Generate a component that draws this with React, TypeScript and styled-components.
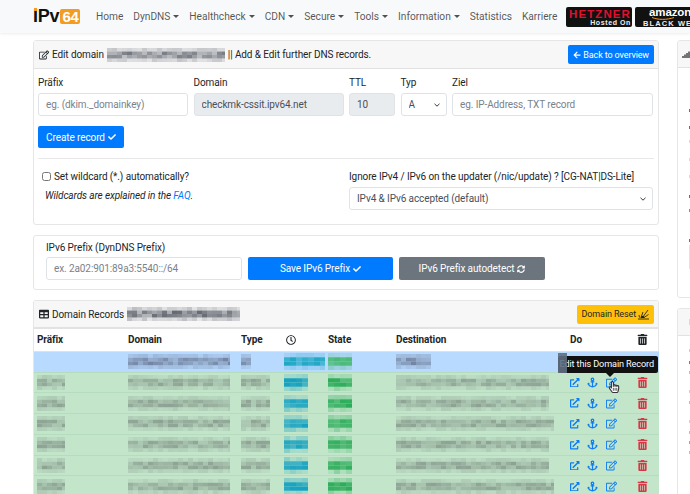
import React from "react";
import styled, { createGlobalStyle } from "styled-components";
import {
  FaAnchor,
  FaArrowLeft,
  FaCheck,
  FaExternalLinkAlt,
  FaHandPointer,
  FaRegClock,
  FaRegEdit,
  FaRegHandPointer,
  FaSignal,
  FaSyncAlt,
  FaTable,
  FaTrashAlt,
} from "react-icons/fa";

const GlobalStyle = createGlobalStyle`
  html, body {
    margin: 0;
    padding: 0;
    width: 690px;
    height: 494px;
    overflow: hidden;
    background: #fff;
    font-family: Roboto, "Open Sans", "Liberation Sans", sans-serif;
    font-size: 10px;
    letter-spacing: -0.1px;
    color: #212529;
  }
  * { box-sizing: border-box; }
`;

// pixelated smudge standing in for the censored strings of the screenshot
const Mosaic: React.FC<{ w: number; color: string; seed: number; h?: number; cell?: number; solid?: boolean }> = ({
  w,
  color,
  seed,
  h = 15,
  cell = 5,
  solid = false,
}) => {
  let s = seed * 7919 + 13;
  const next = () => {
    s = (s * 1103515245 + 12345) & 0x7fffffff;
    return (s >> 8) % 100;
  };
  const rects = [];
  const rowH = h / 4;
  for (let x = 0; x < w; x += cell) {
    for (let r = 0; r < 4; r++) {
      const edge = r === 0 || r === 3;
      const base = edge ? 0.12 : solid ? 0.7 : 0.4;
      rects.push(
        <rect
          key={`${x}-${r}`}
          x={x}
          y={r * rowH}
          width={cell}
          height={rowH}
          fill={color}
          opacity={base + (next() / 100) * (edge ? 0.25 : solid ? 0.3 : 0.55)}
        />
      );
    }
  }
  return (
    <MosaicSvg width={w} height={h}>
      {rects}
    </MosaicSvg>
  );
};

const NAV = [
  { label: "Home" },
  { label: "DynDNS", caret: true },
  { label: "Healthcheck", caret: true },
  { label: "CDN", caret: true },
  { label: "Secure", caret: true },
  { label: "Tools", caret: true },
  { label: "Information", caret: true },
  { label: "Statistics" },
  { label: "Karriere" },
];

const SIDE_TOP: [number, string][] = [
  [44, "#8a6a50"],
  [17, "#8a6a50"],
  [14, "#f6d3a8"],
  [18, "#f6d3a8"],
  [17, "#f6d3a8"],
  [20, "#7a6a60"],
  [14, "#9a8a80"],
  [30, "#8a6a50"],
];

const SIDE_BOTTOM: [number, string][] = [
  [16, "#ecc89c"],
  [12, "#8a7a70"],
  [10, "#d8b898"],
  [19, "#f0c8a0"],
  [11, "#d8b898"],
  [19, "#f0c8a0"],
  [11, "#d8b898"],
  [10, "#b8a088"],
  [10, "#d8b898"],
];

const ROWS = [1, 2, 3, 4, 5, 6];

const ResetIcon = () => (
  <svg width="11" height="11" viewBox="0 0 11 11" fill="none" stroke="#212529" strokeWidth="0.9">
    <path d="M0 10h11" />
    <path d="M4.5 8.5 10 1M3 8.5 5 3M6 8.5 10.5 5.5M1.5 8.5 1 6" />
    <path d="M2.5 9l1-2.2 2.5.5L6.5 9z" fill="#212529" stroke="none" />
  </svg>
);

const App: React.FC = () => {
  return (
    <>
      <GlobalStyle />
      <Navbar>
        <Logo>
          <LogoI>I</LogoI>Pv<LogoBox>64</LogoBox>
        </Logo>
        <NavList>
          {NAV.map((n) => (
            <NavItem key={n.label}>
              {n.label}
              {n.caret && <Caret />}
            </NavItem>
          ))}
        </NavList>
        <Banners>
          <Hetzner>
            <HetznerName>HETZNER</HetznerName>
            <HetznerSub>Hosted On</HetznerSub>
          </Hetzner>
          <Amazon>
            <AmazonName>amazon</AmazonName>
            <AmazonSmile width="24" height="3" viewBox="0 0 24 3">
              <path d="M1 .5C7 3 16 3 23 .5" fill="none" stroke="#f39c1f" strokeWidth="1" />
            </AmazonSmile>
            <AmazonSub>BLACK WEEK</AmazonSub>
          </Amazon>
        </Banners>
      </Navbar>

      <Main>
        <LeftColumn>
          <Card>
            <CardHeader>
              <HeaderTitle>
                <FaRegEdit size={10} color="#212529" />
                <span>Edit domain</span>
                <Mosaic w={118} color="#6b6f78" seed={3} h={14} cell={5} />
                <span>|| Add &amp; Edit further DNS records.</span>
              </HeaderTitle>
              <SmallButton $bg="#007bff" $color="#fff">
                <FaArrowLeft size={8} /> Back to overview
              </SmallButton>
            </CardHeader>
            <CardBody>
              <FormGrid>
                <Field>
                  <Label>Präfix</Label>
                  <Input placeholder="eg. (dkim._domainkey)" />
                </Field>
                <Field>
                  <Label>Domain</Label>
                  <Input disabled value="checkmk-cssit.ipv64.net" readOnly />
                </Field>
                <Field>
                  <Label>TTL</Label>
                  <Input disabled value="10" readOnly />
                </Field>
                <Field>
                  <Label>Typ</Label>
                  <Select defaultValue="A">
                    <option>A</option>
                  </Select>
                </Field>
                <Field>
                  <Label>Ziel</Label>
                  <Input placeholder="eg. IP-Address, TXT record" />
                </Field>
              </FormGrid>
              <CreateButton>
                Create record <FaCheck size={8} />
              </CreateButton>
              <Divider />
              <OptionsRow>
                <div>
                  <CheckRow>
                    <Checkbox type="checkbox" />
                    Set wildcard (*.) automatically?
                  </CheckRow>
                  <Hint>
                    Wildcards are explained in the <FaqLink>FAQ</FaqLink>.
                  </Hint>
                </div>
                <div>
                  <IgnoreLabel>Ignore IPv4 / IPv6 on the updater (/nic/update) ? [CG-NAT|DS-Lite]</IgnoreLabel>
                  <Select defaultValue="d">
                    <option value="d">IPv4 &amp; IPv6 accepted (default)</option>
                  </Select>
                </div>
              </OptionsRow>
            </CardBody>
          </Card>

          <PrefixCard>
            <PrefixLabel>IPv6 Prefix (DynDNS Prefix)</PrefixLabel>
            <PrefixRow>
              <Input placeholder="ex. 2a02:901:89a3:5540::/64" />
              <WideButton $bg="#007bff">
                Save IPv6 Prefix <FaCheck size={8} />
              </WideButton>
              <WideButton $bg="#6c757d">
                IPv6 Prefix autodetect <FaSyncAlt size={8} />
              </WideButton>
            </PrefixRow>
          </PrefixCard>

          <RecordsCard>
            <RecordsHeader>
              <HeaderTitle>
                <FaTable size={10} color="#212529" />
                <span>Domain Records</span>
                <Mosaic w={113} color="#5a5f68" seed={11} h={14} cell={5} />
              </HeaderTitle>
              <SmallButton $bg="#ffc107" $color="#212529">
                Domain Reset <ResetIcon />
              </SmallButton>
            </RecordsHeader>
            <TableWrap>
              <Table>
                <colgroup>
                  <col width={91} />
                  <col width={113} />
                  <col width={45} />
                  <col width={42} />
                  <col width={68} />
                  <col width={174} />
                  <col width={67} />
                  <col width={25} />
                </colgroup>
                <thead>
                  <tr>
                    <Th>Präfix</Th>
                    <Th>Domain</Th>
                    <Th>Type</Th>
                    <Th>
                      <FaRegClock size={10} />
                    </Th>
                    <Th>State</Th>
                    <Th>Destination</Th>
                    <Th>Do</Th>
                    <Th>
                      <FaTrashAlt size={11} />
                    </Th>
                  </tr>
                </thead>
                <tbody>
                  <BlueRow>
                    <td />
                    <Td>
                      <Mosaic w={102} color="#6f7f9c" seed={21} />
                    </Td>
                    <Td>
                      <Mosaic w={10} color="#6f7f9c" seed={22} />
                    </Td>
                    <TealCell>
                      <Mosaic w={41} color="#1ea6c4" seed={23} h={17} cell={6} solid />
                    </TealCell>
                    <Td>
                      <Mosaic w={24} color="#3fb56a" seed={24} h={17} cell={6} solid />
                    </Td>
                    <Td>
                      <Mosaic w={35} color="#6f7f9c" seed={25} />
                    </Td>
                    <td />
                    <td />
                  </BlueRow>
                  {ROWS.map((r) => (
                    <GreenRow key={r}>
                      <Td>
                        <Mosaic w={28} color="#8a9e90" seed={r * 10 + 1} />
                      </Td>
                      <Td>
                        <Mosaic w={102} color="#8a9e90" seed={r * 10 + 2} />
                      </Td>
                      <Td>
                        <Mosaic w={29} color="#8a9e90" seed={r * 10 + 3} />
                      </Td>
                      <TealCell>
                        <Mosaic w={24} color="#129fc0" seed={r * 10 + 4} h={17} cell={6} solid />
                      </TealCell>
                      <Td>
                        <Mosaic w={24} color="#29ab57" seed={r * 10 + 5} h={17} cell={6} solid />
                      </Td>
                      <Td>
                        <Mosaic w={r % 3 === 0 ? 158 : 153} color="#8a9e90" seed={r * 10 + 6} />
                      </Td>
                      <ActionCell>
                        <Actions>
                          <FaExternalLinkAlt size={9.5} />
                          <FaAnchor size={11} />
                          <FaRegEdit size={11} />
                        </Actions>
                      </ActionCell>
                      <TrashCell>
                        <FaTrashAlt size={11} />
                      </TrashCell>
                    </GreenRow>
                  ))}
                </tbody>
              </Table>
              <Tooltip>Edit this Domain Record</Tooltip>
              <TooltipSmudge />
              <Pointer>
                <FaHandPointer size={12} color="#fff" />
                <FaRegHandPointer size={12} color="#333" />
              </Pointer>
            </TableWrap>
          </RecordsCard>
        </LeftColumn>

        <RightColumn>
          <SideCard $h={258}>
            <SideHeader>
              <FaSignal size={10} color="#212529" />
            </SideHeader>
            {SIDE_TOP.map(([gap, c], i) => (
              <SideMark key={i} $gap={gap} $color={c} />
            ))}
            <SideBox />
          </SideCard>
          <SideCard $h={200}>
            <SideHeader>
              <SideMark $gap={0} $color="#f6d3a8" />
            </SideHeader>
            {SIDE_BOTTOM.map(([gap, c], i) => (
              <SideMark key={i} $gap={gap} $color={c} />
            ))}
          </SideCard>
        </RightColumn>
      </Main>
    </>
  );
};

export default App;

const MosaicSvg = styled.svg`
  display: block;
  flex: none;
`;

const Navbar = styled.nav`
  height: 33px;
  background: #f8f9fa;
  display: flex;
  align-items: center;
  padding-left: 33px;
  box-shadow: 0 1px 3px rgba(0, 0, 0, 0.08);
  overflow: hidden;
`;

const Logo = styled.div`
  width: 48px;
  flex: none;
  margin-right: 15px;
  display: flex;
  align-items: center;
  font-family: "Liberation Sans", sans-serif;
  font-weight: 700;
  font-size: 18px;
  letter-spacing: -0.2px;
  color: #111;
`;

const LogoI = styled.span`
  position: relative;
  &::before {
    content: "";
    position: absolute;
    left: 1px;
    top: 2px;
    width: 3px;
    height: 3px;
    background: #f39c1f;
  }
`;

const LogoBox = styled.span`
  background: #f39c1f;
  color: #fff;
  font-size: 15px;
  line-height: 15px;
  padding: 0 1px 0 2px;
  border-radius: 2px;
  margin-left: 1px;
`;

const NavList = styled.div`
  display: flex;
  flex: none;
  align-items: center;
  gap: 10px;
  width: 470px;
  font-size: 10.2px;
  letter-spacing: -0.02px;
  color: rgba(0, 0, 0, 0.68);
`;

const NavItem = styled.span`
  display: flex;
  align-items: center;
  white-space: nowrap;
`;

const Caret = styled.i`
  margin-left: 3px;
  border-top: 3px solid currentColor;
  border-left: 3px solid transparent;
  border-right: 3px solid transparent;
`;

const Banners = styled.div`
  display: flex;
  flex: none;
  gap: 3px;
`;

const BannerBase = styled.div`
  height: 20px;
  background: #111;
  border-radius: 2px;
  display: flex;
  flex-direction: column;
  flex: none;
  overflow: hidden;
  font-family: "Liberation Sans", sans-serif;
  font-weight: 700;
  white-space: nowrap;
`;

const Hetzner = styled(BannerBase)`
  width: 66px;
  padding: 2px 1px 0 1px;
  align-items: flex-end;
`;

const HetznerName = styled.span`
  color: #e0112f;
  font-size: 11.5px;
  line-height: 10px;
  letter-spacing: 1.1px;
`;

const HetznerSub = styled.span`
  color: #eee;
  font-size: 7px;
  line-height: 8px;
  letter-spacing: 0.6px;
`;

const Amazon = styled(BannerBase)`
  width: 70px;
  position: relative;
  align-items: flex-start;
  padding-left: 8px;
`;

const AmazonName = styled.span`
  color: #fff;
  font-size: 11.5px;
  line-height: 10px;
  padding-left: 6px;
`;

const AmazonSmile = styled.svg`
  display: block;
  margin-left: 8px;
  flex: none;
`;

const AmazonSub = styled.span`
  color: #eee;
  font-size: 7.5px;
  line-height: 7px;
  letter-spacing: 1.1px;
`;

const Main = styled.main`
  display: flex;
  gap: 18px;
  padding: 7px 0 0 33px;
  width: 900px;
`;

const LeftColumn = styled.div`
  width: 626px;
  flex: none;
  display: flex;
  flex-direction: column;
  gap: 10px;
`;

const RightColumn = styled.div`
  width: 200px;
  flex: none;
  display: flex;
  flex-direction: column;
  gap: 10px;
`;

const Card = styled.section`
  border: 1px solid #e6e6e6;
  border-radius: 3px;
  background: #fff;
`;

const CardHeader = styled.header`
  height: 28px;
  background: #f7f7f7;
  border-bottom: 1px solid #e2e2e2;
  display: flex;
  align-items: center;
  justify-content: space-between;
  padding: 0 4px 0 5px;
`;

const HeaderTitle = styled.div`
  display: flex;
  align-items: center;
  gap: 3px;
  white-space: nowrap;
`;

const SmallButton = styled.button<{ $bg: string; $color: string }>`
  height: 19px;
  padding: 0 5px;
  border: 0;
  border-radius: 2px;
  background: ${(p) => p.$bg};
  color: ${(p) => p.$color};
  font: inherit;
  letter-spacing: -0.12px;
  font-size: 9px;
  display: flex;
  align-items: center;
  gap: 2px;
  white-space: nowrap;
`;

const CardBody = styled.div`
  padding: 6px 4px 0 4px;
  height: 155px;
`;

const FormGrid = styled.div`
  display: grid;
  grid-template-columns: 150px 150px 46px 46px 201px;
  column-gap: 5.5px;
`;

const Field = styled.label`
  display: block;
`;

const Label = styled.div`
  height: 16px;
  line-height: 16px;
  margin-bottom: 2px;
`;

const Input = styled.input`
  display: block;
  width: 100%;
  height: 23px;
  padding: 0 7px;
  border: 1px solid #dfe3e7;
  border-radius: 3px;
  background: #fff;
  font: inherit;
  letter-spacing: inherit;
  color: #495057;
  &::placeholder {
    color: #7a828a;
    opacity: 1;
  }
  &:disabled {
    background: #e9ecef;
  }
`;

const Select = styled.select`
  display: block;
  width: 100%;
  height: 23px;
  padding: 0 16px 0 7px;
  border: 1px solid #dfe3e7;
  border-radius: 3px;
  font: inherit;
  letter-spacing: inherit;
  color: #495057;
  appearance: none;
  background: #fff
    url("data:image/svg+xml,%3Csvg xmlns='http://www.w3.org/2000/svg' width='6' height='4' viewBox='0 0 6 4'%3E%3Cpath d='M.5 .8 3 3.2 5.5 .8' fill='none' stroke='%23343a40' stroke-width='1'/%3E%3C/svg%3E")
    no-repeat right 6px center;
`;

const CreateButton = styled.button`
  margin-top: 10px;
  width: 86px;
  height: 22px;
  border: 0;
  border-radius: 2px;
  background: #007bff;
  color: #fff;
  font: inherit;
  letter-spacing: inherit;
  white-space: nowrap;
  display: flex;
  align-items: center;
  justify-content: center;
  gap: 3px;
`;

const Divider = styled.hr`
  margin: 10px 0 0;
  border: 0;
  border-top: 1px solid #e8e8e8;
`;

const OptionsRow = styled.div`
  display: grid;
  grid-template-columns: 311px 304px;
  padding-top: 10px;
`;

const CheckRow = styled.div`
  display: flex;
  align-items: center;
  gap: 3px;
  height: 15px;
  padding-left: 4px;
`;

const Checkbox = styled.input`
  margin: 0;
  width: 9px;
  height: 9px;
`;

const Hint = styled.div`
  margin-top: 4px;
  padding-left: 7px;
  line-height: 15px;
  font-style: italic;
`;

const FaqLink = styled.a`
  color: #007bff;
`;

const IgnoreLabel = styled.div`
  height: 15px;
  line-height: 15px;
  margin-bottom: 3px;
  white-space: nowrap;
`;

const PrefixCard = styled(Card)`
  height: 55px;
  padding: 4px 12px 0 12px;
`;

const PrefixLabel = styled.div`
  height: 15px;
  line-height: 15px;
  margin-bottom: 2px;
`;

const PrefixRow = styled.div`
  display: grid;
  grid-template-columns: 196px 145px 146px;
  gap: 6px;
`;

const WideButton = styled.button<{ $bg: string }>`
  height: 23px;
  border: 0;
  border-radius: 2px;
  background: ${(p) => p.$bg};
  color: #fff;
  font: inherit;
  letter-spacing: inherit;
  display: flex;
  align-items: center;
  justify-content: center;
  gap: 3px;
`;

const RecordsCard = styled(Card)`
  border-bottom: 0;
  border-radius: 3px 3px 0 0;
`;

const RecordsHeader = styled(CardHeader)`
  border-bottom: 2px solid #e2e2e2;
`;

const TableWrap = styled.div`
  position: relative;
`;

const Table = styled.table`
  width: 625px;
  table-layout: fixed;
  border-collapse: collapse;
`;

const Th = styled.th`
  height: 22px;
  padding: 0 0 0 3px;
  text-align: left;
  vertical-align: middle;
  font-weight: 700;
  font-size: 10px;
  border-bottom: 1px solid #dee2e6;
  svg {
    display: block;
  }
`;

const Td = styled.td`
  padding: 0 0 0 3px;
  height: 20.8px;
  overflow: hidden;
`;

const BlueRow = styled.tr`
  background: #b8daff;
  height: 21px;
`;

const GreenRow = styled.tr`
  background: #c3e6cb;
  border-top: 1px solid #b5dcbf;
`;

const TealCell = styled(Td)`
  padding-left: 1px;
`;

const ActionCell = styled(Td)`
  padding-left: 3px;
`;

const Actions = styled.div`
  display: flex;
  align-items: center;
  gap: 7.5px;
  color: #0d7cf2;
`;

const TrashCell = styled(Td)`
  padding-left: 3px;
  color: #dc3545;
  line-height: 0;
`;

const Tooltip = styled.div`
  position: absolute;
  left: 524px;
  top: 27px;
  width: 100px;
  height: 17px;
  border-radius: 2px;
  background: #111;
  color: #fff;
  font-size: 9.1px;
  line-height: 17px;
  text-align: right;
  padding-right: 4px;
  white-space: nowrap;
  &::after {
    content: "";
    position: absolute;
    left: 48px;
    top: 17px;
    border-top: 4px solid #111;
    border-left: 4px solid transparent;
    border-right: 4px solid transparent;
  }
`;

const TooltipSmudge = styled.div`
  position: absolute;
  left: 524px;
  top: 24px;
  width: 9px;
  height: 20px;
  background: #5f6f82;
  opacity: 0.9;
`;

const Pointer = styled.div`
  position: absolute;
  left: 574px;
  top: 52px;
  width: 12px;
  height: 12px;
  svg {
    position: absolute;
    left: 0;
    top: 0;
  }
`;

const SideCard = styled(Card)<{ $h: number }>`
  height: ${(p) => p.$h}px;
  overflow: hidden;
`;

const SideHeader = styled.header`
  height: 27px;
  background: #f7f7f7;
  border-bottom: 1px solid #e2e2e2;
  display: flex;
  align-items: center;
  padding-left: 4px;
  svg {
    flex: none;
  }
  div {
    margin-left: 7px;
    margin-top: 0;
    height: 6px;
  }
`;

const SideMark = styled.div<{ $gap: number; $color: string }>`
  width: 40px;
  height: 3px;
  margin: ${(p) => p.$gap - 3}px 0 0 11px;
  background: ${(p) => p.$color};
`;

const SideBox = styled.div`
  width: 100px;
  height: 24px;
  margin: 3px 0 0 11px;
  border: 1px solid #dfe3e7;
`;
